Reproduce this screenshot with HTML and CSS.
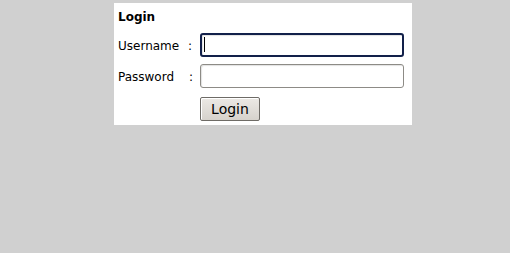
FILE: index.html
```html
<!DOCTYPE html>
<html>
<head>
<meta charset="utf-8">
<link rel="stylesheet" href="styles.css">
</head>
<body>
<form class="login-box">
  <div class="title">Login</div>
  <div class="grid">
    <label class="lbl" for="u">Username</label>
    <span class="colon">:</span>
    <span class="field-wrap">
      <input id="u" class="field focused" type="text">
      <span class="caret"></span>
    </span>
    <label class="lbl" for="p">Password</label>
    <span class="colon colon-2">:</span>
    <span class="field-wrap">
      <input id="p" class="field" type="password">
    </span>
    <span></span>
    <span></span>
    <div class="btn-cell"><button type="button" class="btn">Login</button></div>
  </div>
</form>
</body>
</html>
```

FILE: styles.css
```css
html, body {
  margin: 0;
  padding: 0;
  background: #d0d0d0;
}
body {
  padding: 3px 0 0 114px;
  font-family: "DejaVu Sans", sans-serif;
  font-size: 12px;
  color: #000;
}
.login-box {
  width: 298px;
  height: 122px;
  box-sizing: border-box;
  background: #fff;
  padding: 7px 8px 0 4px;
  margin: 0;
}
.title {
  font-weight: bold;
  line-height: 14px;
  height: 14px;
}
.grid {
  display: grid;
  grid-template-columns: 70px 12px 204px;
  row-gap: 7px;
  margin-top: 9px;
  align-items: center;
}
.lbl {
  line-height: 14px;
  padding-top: 1px;
}
.colon {
  line-height: 14px;
  padding-top: 1px;
}
.colon-2 {
  padding-left: 1px;
}
.field-wrap {
  position: relative;
  display: block;
  height: 24px;
}
.field {
  display: block;
  box-sizing: border-box;
  width: 204px;
  height: 24px;
  margin: 0;
  padding: 2px 4px;
  border: 1px solid #8d8b86;
  border-radius: 3px;
  background: #fff;
  font-family: "DejaVu Sans", sans-serif;
  font-size: 12px;
  outline: none;
  box-shadow: inset 1px 1px 1px rgba(0,0,0,0.12);
}
.field.focused {
  border: 2px solid #12204a;
  padding: 1px 3px;
}
.caret {
  position: absolute;
  left: 4px;
  top: 4px;
  width: 1px;
  height: 15px;
  background: #000;
}
.btn-cell {
  padding-top: 2px;
}
.btn {
  display: block;
  box-sizing: border-box;
  width: 60px;
  height: 24px;
  margin: 0;
  padding: 0;
  border: 1px solid #6e6b66;
  border-radius: 2px;
  background: linear-gradient(#ece9e5, #d6d2cc);
  font-family: "DejaVu Sans", sans-serif;
  font-size: 14px;
  color: #000;
  box-shadow: inset 1px 1px 0 #fff;
}
```
